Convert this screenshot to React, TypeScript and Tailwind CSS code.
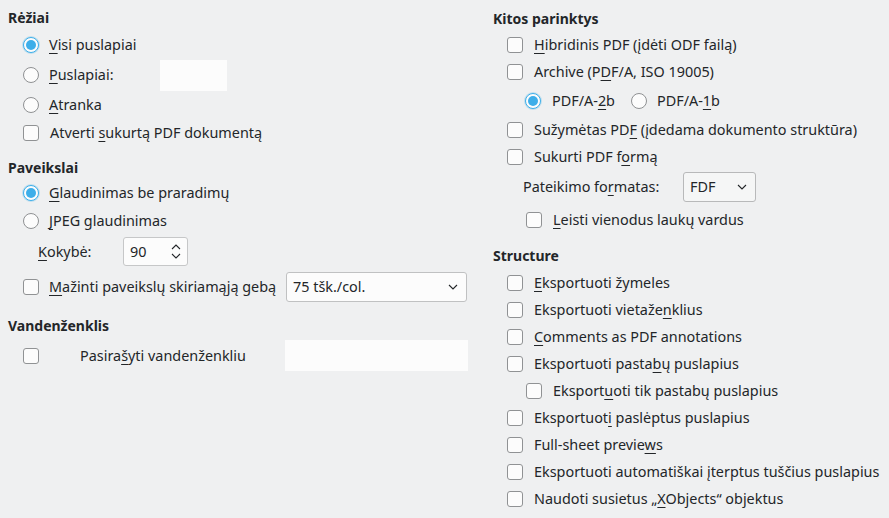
import React from "react";

const Mn = ({ children }: { children: React.ReactNode }) => (
  <span className="underline decoration-1 underline-offset-[3px]">{children}</span>
);

function Radio({ checked }: { checked?: boolean }) {
  if (checked) {
    return (
      <span className="flex h-4 w-4 shrink-0 items-center justify-center rounded-full border border-[#3daee9] bg-[#fcfcfc] shadow-[0_0_0_1px_rgba(61,174,233,0.25)]">
        <span className="h-[10px] w-[10px] rounded-full bg-[#3daee9]" />
      </span>
    );
  }
  return <span className="h-4 w-4 shrink-0 rounded-full border border-[#8f9193] bg-[#fcfcfc]" />;
}

function Check() {
  return <span className="h-4 w-4 shrink-0 rounded-[3px] border border-[#909294] bg-[#fcfcfc]" />;
}

function Chevron({ className = "" }: { className?: string }) {
  return (
    <svg width="10" height="6" viewBox="0 0 10 6" className={className}>
      <path d="M1 1 L5 5 L9 1" fill="none" stroke="#232629" strokeWidth="1.1" />
    </svg>
  );
}

function Header({ children, className = "" }: { children: React.ReactNode; className?: string }) {
  return <div className={"flex items-center text-[14px] font-bold " + className}>{children}</div>;
}

function CheckRow({ children, className = "h-[27px] pl-[27px]" }: { children: React.ReactNode; className?: string }) {
  return (
    <div className={"flex items-center gap-[11px] " + className}>
      <Check />
      <span>{children}</span>
    </div>
  );
}

export default function App() {
  return (
    <div
      className="flex h-[518px] w-[889px] bg-[#eff0f1] text-[14.4px] text-[#232629]"
      style={{ fontFamily: '"Noto Sans", "Open Sans", sans-serif' }}
    >
      {/* left column */}
      <div className="flex w-[480px] flex-col pl-2 pt-[5px]">
        <Header className="h-6">Rėžiai</Header>
        <div className="mt-[2px] flex h-7 items-center gap-[10px] pl-[15px]">
          <Radio checked />
          <span>
            <Mn>V</Mn>isi puslapiai
          </span>
        </div>
        <div className="flex h-8 items-center pl-[15px]">
          <Radio />
          <span className="ml-[10px] w-[111px]">
            <Mn>P</Mn>uslapiai:
          </span>
          <div className="h-[31px] w-[67px] bg-[#fcfcfc]" />
        </div>
        <div className="flex h-7 items-center gap-[10px] pl-[15px]">
          <Radio />
          <span>
            <Mn>A</Mn>tranka
          </span>
        </div>
        <CheckRow className="h-[27px] pl-[15px]">
          Atverti <Mn>s</Mn>ukurtą PDF dokumentą
        </CheckRow>

        <Header className="mt-[9px] h-6">Paveikslai</Header>
        <div className="flex h-7 items-center gap-[10px] pl-[15px]">
          <Radio checked />
          <span>
            <Mn>G</Mn>laudinimas be praradimų
          </span>
        </div>
        <div className="flex h-[27px] items-center gap-[10px] pl-[15px]">
          <Radio />
          <span>
            <Mn>J</Mn>PEG glaudinimas
          </span>
        </div>
        <div className="flex h-[35px] items-center pl-[30px]">
          <span className="w-[85px]">
            <Mn>K</Mn>okybė:
          </span>
          <div className="flex h-[29px] w-[65px] items-center justify-between rounded-[3px] border border-[#c6c7c8] bg-[#fcfcfc] pl-[6px] pr-[6px]">
            <span>90</span>
            <div className="flex flex-col gap-[3px]">
              <Chevron className="rotate-180" />
              <Chevron />
            </div>
          </div>
        </div>
        <div className="flex h-[35px] items-center pl-[15px]">
          <Check />
          <span className="ml-[10px] w-[237px]">
            <Mn>M</Mn>ažinti paveikslų skiriamąją gebą
          </span>
          <div className="flex h-[30px] w-[181px] items-center justify-between rounded-[3px] border border-[#c0c1c2] bg-[#fcfcfc] pl-[6px] pr-[8px]">
            <span>75 tšk./col.</span>
            <Chevron />
          </div>
        </div>

        <Header className="mt-[9px] h-6">Vandenženklis</Header>
        <div className="flex h-[37px] items-center pl-[15px]">
          <Check />
          <span className="ml-[41px] w-[205px]">
            Pasira<Mn>š</Mn>yti vandenženkliu
          </span>
          <div className="h-[31px] w-[183px] bg-[#fcfcfc]" />
        </div>
      </div>

      {/* right column */}
      <div className="flex flex-1 flex-col pl-[13px] pt-[6px]">
        <Header className="h-6">Kitos parinktys</Header>
        <CheckRow className="mt-px h-[27px] pl-[14px]">
          <Mn>H</Mn>ibridinis PDF (įdėti ODF failą)
        </CheckRow>
        <CheckRow className="h-[27px] pl-[14px]">
          Archive (P<Mn>D</Mn>F/A, ISO 19005)
        </CheckRow>
        <div className="flex h-[31px] items-center pl-[32px]">
          <Radio checked />
          <span className="ml-[11px]">
            PDF/A-<Mn>2</Mn>b
          </span>
          <span className="ml-[16px] flex">
            <Radio />
          </span>
          <span className="ml-[10px]">
            PDF/A-<Mn>1</Mn>b
          </span>
        </div>
        <CheckRow className="h-[27px] pl-[14px]">
          Sužymėtas PD<Mn>F</Mn> (įdedama dokumento struktūra)
        </CheckRow>
        <CheckRow className="h-[27px] pl-[14px]">
          Sukurti PDF f<Mn>o</Mn>rmą
        </CheckRow>
        <div className="flex h-[34px] items-center pl-[30px]">
          <span className="w-[160px]">
            Pateikimo fo<Mn>r</Mn>matas:
          </span>
          <div className="flex h-[30px] w-[73px] items-center justify-between rounded-[3px] border border-[#b8b9ba] bg-[#f5f6f6] pl-[6px] pr-[8px]">
            <span>FDF</span>
            <Chevron />
          </div>
        </div>
        <CheckRow className="h-8 pl-[33px]">
          <Mn>L</Mn>eisti vienodus laukų vardus
        </CheckRow>

        <Header className="mt-[7px] h-[25px]">Structure</Header>
        <CheckRow className="mt-px h-[27px] pl-[14px]">
          <Mn>E</Mn>ksportuoti žymeles
        </CheckRow>
        <CheckRow className="h-[27px] pl-[14px]">
          Eksportuoti vietaže<Mn>n</Mn>klius
        </CheckRow>
        <CheckRow className="h-[27px] pl-[14px]">
          <Mn>C</Mn>omments as PDF annotations
        </CheckRow>
        <CheckRow className="h-[27px] pl-[14px]">
          Eksportuoti pasta<Mn>b</Mn>ų puslapius
        </CheckRow>
        <CheckRow className="h-[27px] pl-[33px]">
          Eksport<Mn>u</Mn>oti tik pastabų puslapius
        </CheckRow>
        <CheckRow className="h-[27px] pl-[14px]">
          Eksportuot<Mn>i</Mn> paslėptus puslapius
        </CheckRow>
        <CheckRow className="h-[27px] pl-[14px]">
          Full-sheet previe<Mn>w</Mn>s
        </CheckRow>
        <CheckRow className="h-[27px] pl-[14px]">
          Eksportuoti automatiškai įterptus tuščius puslapius
        </CheckRow>
        <CheckRow className="h-[27px] pl-[14px]">
          Naudoti susietus „<Mn>X</Mn>Objects“ objektus
        </CheckRow>
      </div>
    </div>
  );
}
